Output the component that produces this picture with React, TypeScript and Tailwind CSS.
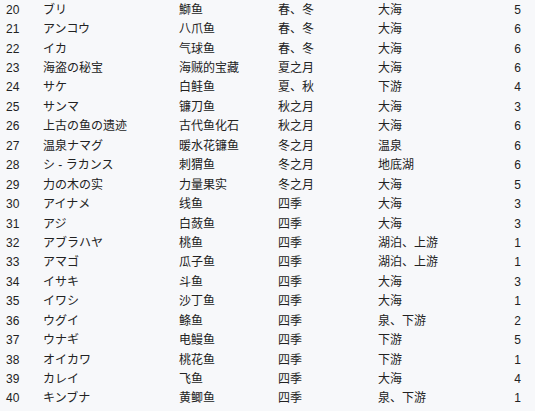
import React from 'react';

const rows: [number, string, string, string, string, number][] = [
  [20, 'ブリ', '鰤鱼', '春、冬', '大海', 5],
  [21, 'アンコウ', '八爪鱼', '春、冬', '大海', 6],
  [22, 'イカ', '气球鱼', '春、冬', '大海', 6],
  [23, '海盗の秘宝', '海贼的宝藏', '夏之月', '大海', 6],
  [24, 'サケ', '白鲑鱼', '夏、秋', '下游', 4],
  [25, 'サンマ', '镰刀鱼', '秋之月', '大海', 3],
  [26, '上古の鱼の遗迹', '古代鱼化石', '秋之月', '大海', 6],
  [27, '温泉ナマグ', '暖水花镰鱼', '冬之月', '温泉', 6],
  [28, 'シ - ラカンス', '刺猬鱼', '冬之月', '地底湖', 6],
  [29, '力の木の实', '力量果实', '冬之月', '大海', 5],
  [30, 'アイナメ', '线鱼', '四季', '大海', 3],
  [31, 'アジ', '白蔹鱼', '四季', '大海', 3],
  [32, 'アブラハヤ', '桃鱼', '四季', '湖泊、上游', 1],
  [33, 'アマゴ', '瓜子鱼', '四季', '湖泊、上游', 1],
  [34, 'イサキ', '斗鱼', '四季', '大海', 3],
  [35, 'イワシ', '沙丁鱼', '四季', '大海', 1],
  [36, 'ウグイ', '鲦鱼', '四季', '泉、下游', 2],
  [37, 'ウナギ', '电鳗鱼', '四季', '下游', 5],
  [38, 'オイカワ', '桃花鱼', '四季', '下游', 1],
  [39, 'カレイ', '飞鱼', '四季', '大海', 4],
  [40, 'キンブナ', '黄鲫鱼', '四季', '泉、下游', 1],
];

export default function App() {
  return (
    <div
      className="w-[535px] h-[411px] bg-[#f7f8fa] text-[#222] text-[12px] overflow-hidden"
      style={{ fontFamily: '"Liberation Sans", "Noto Sans CJK SC", sans-serif' }}
    >
      {rows.map((r) => (
        <div
          key={r[0]}
          className="grid grid-cols-[37px_136px_99px_100px_1fr] items-center h-[19.45px] pl-[6px] pr-[14px] leading-none"
        >
          <span>{r[0]}</span>
          <span>{r[1]}</span>
          <span>{r[2]}</span>
          <span>{r[3]}</span>
          <div className="flex justify-between">
            <span>{r[4]}</span>
            <span>{r[5]}</span>
          </div>
        </div>
      ))}
    </div>
  );
}
